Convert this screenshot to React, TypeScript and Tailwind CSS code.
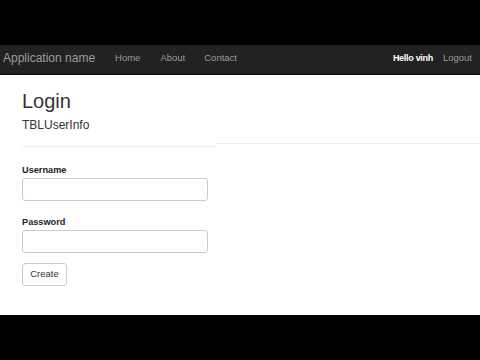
import React from "react";

export default function App() {
  const font = { fontFamily: '"Liberation Sans", Arial, sans-serif' };
  return (
    <div className="w-[480px] h-[360px] flex flex-col bg-black" style={font}>
      <div className="h-[45px] bg-black" />
      <div className="h-[30px] bg-[#222222] border-b border-[#080808] flex items-center pb-[4px]">
        <span className="ml-[3px] text-[12px] leading-[14px] text-[#9d9d9d]">Application name</span>
        <span className="ml-[20px] text-[9.5px] leading-[12px] text-[#9d9d9d]">Home</span>
        <span className="ml-[20px] text-[9.5px] leading-[12px] text-[#9d9d9d]">About</span>
        <span className="ml-[19px] text-[9.5px] leading-[12px] text-[#9d9d9d]">Contact</span>
        <span className="ml-auto text-[9px] leading-[12px] text-white font-bold tracking-[-0.3px]">Hello vinh</span>
        <span className="ml-[10px] mr-[8px] text-[9.5px] leading-[12px] text-[#9d9d9d]">Logout</span>
      </div>
      <div className="h-[240px] bg-white text-[#333333] flex flex-col">
        <div className="flex items-end">
          <div className="ml-[22px] w-[194px] pt-[15px] pb-[14px] border-b border-[#eeeeee]">
            <div className="text-[20px] leading-[22px]">Login</div>
            <div className="mt-[6px] text-[12px] leading-[14px]">TBLUserInfo</div>
          </div>
          <div className="flex-1 mb-[3px] border-b border-[#eeeeee]" />
        </div>
        <div className="ml-[22px] flex flex-col">
          <div className="mt-[18px] text-[9.2px] leading-[11px] font-bold text-[#222]">Username</div>
          <div className="mt-[2px] w-[186px] h-[23px] border border-[#cccccc] rounded-[3px] bg-white" />
          <div className="mt-[16px] text-[9.2px] leading-[11px] font-bold text-[#222]">Password</div>
          <div className="mt-[2px] w-[186px] h-[23px] border border-[#cccccc] rounded-[3px] bg-white" />
          <div className="mt-[10px] w-[45px] h-[23px] border border-[#cccccc] rounded-[3px] bg-white flex items-center justify-center text-[9.5px] text-[#333]">
            Create
          </div>
        </div>
      </div>
      <div className="flex-1 bg-black" />
    </div>
  );
}
